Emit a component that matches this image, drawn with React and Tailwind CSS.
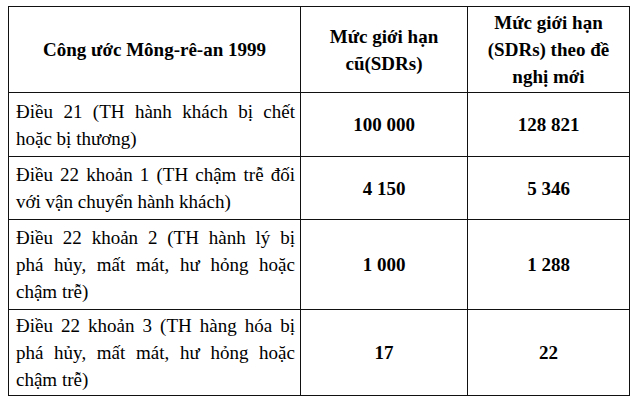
import React from 'react';

const rows = [
    { lines: ['Điều 21 (TH hành khách bị chết', 'hoặc bị thương)'], oldVal: '100 000', newVal: '128 821', h: 'h-[64px]' },
    { lines: ['Điều 22 khoản 1 (TH chậm trễ đối', 'với vận chuyển hành khách)'], oldVal: '4 150', newVal: '5 346', h: 'h-[63px]' },
    { lines: ['Điều 22 khoản 2 (TH hành lý bị', 'phá hủy, mất mát, hư hỏng hoặc', 'chậm trễ)'], oldVal: '1 000', newVal: '1 288', h: 'h-[90px]' },
    { lines: ['Điều 22 khoản 3 (TH hàng hóa bị', 'phá hủy, mất mát, hư hỏng hoặc', 'chậm trễ)'], oldVal: '17', newVal: '22', h: 'h-[86px]' },
];

// justified lines: every line but the last is stretched to the full cell width
const JustifiedLines = ({ lines }) => (
    <div>
        {lines.map((line, i) => (
            <div
                key={i}
                className={i < lines.length - 1 ? 'text-justify [text-align-last:justify]' : 'text-left'}
            >
                {line}
            </div>
        ))}
    </div>
);

const App = () => {
    return (
        <div
            className="w-[640px] h-[406px] bg-white pl-[8px] pt-[6px] text-black text-[19px] leading-[27px]"
            style={{ fontFamily: '"Liberation Serif", "Times New Roman", serif' }}
        >
            <table className="border-collapse w-[621px] table-fixed">
                <colgroup>
                    <col className="w-[292px]" />
                    <col className="w-[167px]" />
                    <col className="w-[162px]" />
                </colgroup>
                <thead>
                    <tr className="h-[86px]">
                        <th className="border border-[#111] font-bold text-center align-middle px-1">
                            Công ước Mông-rê-an 1999
                        </th>
                        <th className="border border-[#111] font-bold text-center align-middle px-1">
                            <div>Mức giới hạn</div>
                            <div>cũ(SDRs)</div>
                        </th>
                        <th className="border border-[#111] font-bold text-center align-middle px-1">
                            <div>Mức giới hạn</div>
                            <div>(SDRs) theo đề</div>
                            <div>nghị mới</div>
                        </th>
                    </tr>
                </thead>
                <tbody>
                    {rows.map((r, i) => (
                        <tr key={i} className={r.h}>
                            <td className="border border-[#111] align-middle pl-[7px] pr-[5px]">
                                <JustifiedLines lines={r.lines} />
                            </td>
                            <td className="border border-[#111] align-middle text-center font-bold">
                                {r.oldVal}
                            </td>
                            <td className="border border-[#111] align-middle text-center font-bold">
                                {r.newVal}
                            </td>
                        </tr>
                    ))}
                </tbody>
            </table>
        </div>
    );
};

export default App;
